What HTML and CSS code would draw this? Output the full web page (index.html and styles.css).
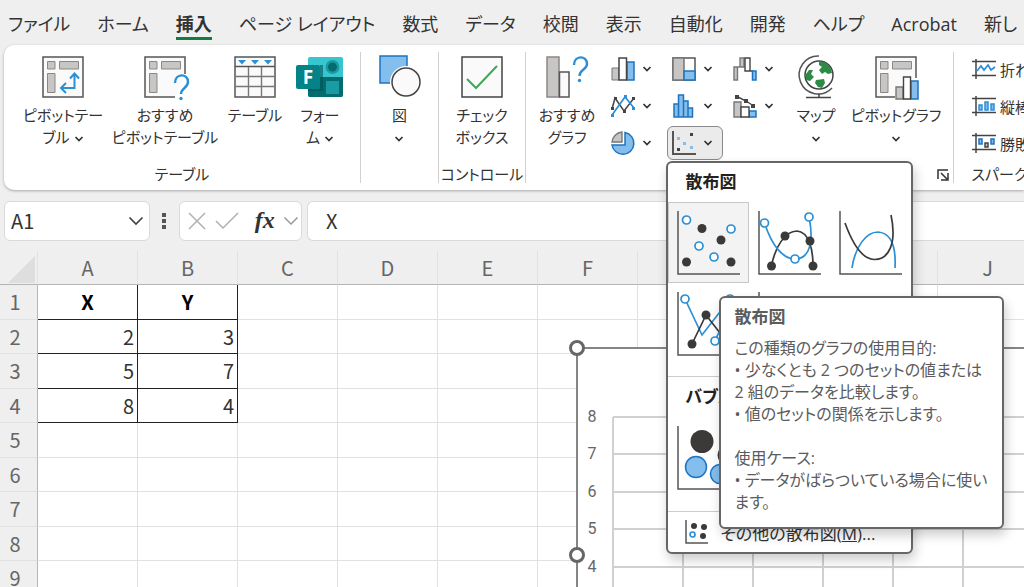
FILE: index.html
```html
<!DOCTYPE html>
<html lang="ja">
<head>
    <meta charset="UTF-8">
    <meta name="viewport" content="width=device-width, initial-scale=1.0">
    <title>Excel</title>
    <link rel="stylesheet" href="styles.css">
</head>
<body>
    <svg class="defs" width="0" height="0" aria-hidden="true">
        <symbol id="chev" viewBox="0 0 10 8"><path d="M1.5 2 L5 5.5 L8.5 2" fill="none" stroke="#333" stroke-width="1.7"/></symbol>
    </svg>
    <nav class="tabs">
        <a href="#">ファイル</a>
        <a href="#">ホーム</a>
        <a href="#" class="active">挿入</a>
        <a href="#">ページ レイアウト</a>
        <a href="#">数式</a>
        <a href="#">データ</a>
        <a href="#">校閲</a>
        <a href="#">表示</a>
        <a href="#">自動化</a>
        <a href="#">開発</a>
        <a href="#">ヘルプ</a>
        <a href="#">Acrobat</a>
        <a href="#">新し</a>
    </nav>

    <div class="ribbon">
        <section class="group group-tables">
            <div class="tools">
                <button class="tool">
                    <svg class="icon" viewBox="0 0 42 42"><path d="M1 1H41V41H1Z" fill="#fafafa" stroke="#555" stroke-width="1.5"/><g fill="#c8c6c4" stroke="#8a8886"><path d="M5.5 5.5H13V13H5.5Z M17.5 5.5H36.5V13H17.5Z M5.5 17.5H13V36.5H5.5Z"/></g><path d="M32.5 18V32H19 M28 22.5L32.5 17.5L37 22.5 M24 27L19 32L24 37" fill="none" stroke="#2b8fd6" stroke-width="2"/></svg>
                    <span>ピボットテー<br>ブル <svg class="chev"><use href="#chev"/></svg></span>
                </button>
                <button class="tool">
                    <svg class="icon" viewBox="0 0 42 42"><path d="M31 41H1V1H41V18" fill="#fafafa" stroke="#555" stroke-width="1.5"/><g fill="#c8c6c4" stroke="#8a8886"><path d="M5.5 5.5H13V13H5.5Z M17.5 5.5H36.5V13H17.5Z M5.5 17.5H13V36.5H5.5Z"/></g><path d="M31 27C31 17 44 17 44 26C44 32 37 32 37 38" fill="none" stroke="#2b8fd6" stroke-width="2.4"/><circle cx="37" cy="42.5" r="1.7" fill="#2b8fd6"/></svg>
                    <span>おすすめ<br>ピボットテーブル</span>
                </button>
                <button class="tool">
                    <svg class="icon" viewBox="0 0 42 42"><path d="M1 1H41V41H1Z" fill="#fafafa" stroke="#555" stroke-width="1.5"/><path d="M1 10.5H41" stroke="#555" stroke-width="1.5"/><path d="M1 20.5H41 M1 30.5H41 M14.5 11V41 M27.5 11V41" stroke="#777" stroke-width="1.4"/><path d="M4 4H12L8 8.5Z M17 4H25L21 8.5Z M30 4H38L34 8.5Z" fill="#2b8fd6"/></svg>
                    <span>テーブル</span>
                </button>
                <button class="tool">
                    <svg class="icon wide" viewBox="0 0 48 42"><rect x="12" y="1" width="35" height="40" rx="2" fill="#37c6d0"/><path d="M12 21H47V39a2 2 0 0 1-2 2H14a2 2 0 0 1-2-2Z" fill="#036c70"/><circle cx="36.5" cy="11" r="7" fill="#1a9ba1"/><circle cx="36.5" cy="11" r="4.5" fill="#036c70"/><rect x="30" y="25" width="13" height="13" fill="#1a9ba1"/><path d="M24 9H27V35H12V33H24Z" fill="#025357" opacity=".6"/><rect x="0" y="9" width="24" height="24" rx="2" fill="#038387"/><text x="12" y="27.5" text-anchor="middle" class="forms-f">F</text></svg>
                    <span>フォー<br>ム <svg class="chev"><use href="#chev"/></svg></span>
                </button>
            </div>
            <div class="group-name">テーブル</div>
        </section>

        <section class="group group-shapes">
            <div class="tools">
                <button class="tool">
                    <svg class="icon" viewBox="0 0 42 42"><path d="M1 0H28V27H1Z" fill="#83beec" stroke="#1e74c0" stroke-width="1.5"/><circle cx="27" cy="26" r="16" fill="#fff"/><circle cx="27" cy="26" r="14" fill="#fafafa" stroke="#444" stroke-width="1.5"/></svg>
                    <span>図<br><svg class="chev"><use href="#chev"/></svg></span>
                </button>
            </div>
        </section>

        <section class="group group-controls">
            <div class="tools">
                <button class="tool">
                    <svg class="icon" viewBox="0 0 42 42"><path d="M1 1H41V41H1Z" fill="#fafafa" stroke="#444" stroke-width="1.5"/><path d="M6 23L15 32L36 10" fill="none" stroke="#3fa858" stroke-width="2"/></svg>
                    <span>チェック<br>ボックス</span>
                </button>
            </div>
            <div class="group-name">コントロール</div>
        </section>

        <section class="group group-charts">
            <div class="tools">
                <button class="tool">
                    <svg class="icon" viewBox="0 0 42 42"><path d="M1 1H13V41H1Z" fill="#c8c6c4" stroke="#8a8886" stroke-width="1.5"/><path d="M13.5 16H23V41H13.5Z" fill="#fafafa" stroke="#555" stroke-width="1.5"/><path d="M28 9C28-1 41-1 41 8C41 14 33.5 13 33.5 20" fill="none" stroke="#2b8fd6" stroke-width="2.4"/><circle cx="33.5" cy="24.5" r="1.7" fill="#2b8fd6"/></svg>
                    <span>おすすめ<br>グラフ</span>
                </button>
                <div class="chart-buttons">
                    <button class="mini" aria-label="縦棒">
                        <svg class="mini-icon" viewBox="0 0 24 24"><path d="M1 11H8V23H1Z" fill="#c8c6c4" stroke="#777"/><path d="M16 5H23V23H16Z" fill="#83beec" stroke="#1e74c0" stroke-width="1.5"/><path d="M8 1H15.5V23H8Z" fill="#fff" stroke="#444" stroke-width="1.5"/></svg>
                        <svg class="chev"><use href="#chev"/></svg>
                    </button>
                    <button class="mini" aria-label="階層構造">
                        <svg class="mini-icon" viewBox="0 0 24 24"><path d="M1 1H23V23H1Z" fill="#fff" stroke="#555" stroke-width="1.5"/><path d="M1 1H12V23H1Z" fill="#c8c6c4" stroke="#777" stroke-width="1.5"/><path d="M12 14H23V23H12Z" fill="#83beec" stroke="#1e74c0" stroke-width="1.5"/></svg>
                        <svg class="chev"><use href="#chev"/></svg>
                    </button>
                    <button class="mini" aria-label="ウォーターフォール">
                        <svg class="mini-icon" viewBox="0 0 24 24"><path d="M1 10H4.5V23H1Z M7 1H11V10H7Z M4 10H7" fill="#c8c6c4" stroke="#777" stroke-width="1.4"/><path d="M12 1H17V14H12Z M17 14H20" fill="#fff" stroke="#444" stroke-width="1.4"/><path d="M19.5 14H23V23H19.5Z" fill="#83beec" stroke="#1e74c0" stroke-width="1.5"/></svg>
                        <svg class="chev"><use href="#chev"/></svg>
                    </button>
                    <button class="mini" aria-label="折れ線">
                        <svg class="mini-icon" viewBox="0 0 24 24"><path d="M1 15L4 4L13 17L23 4" fill="none" stroke="#444" stroke-width="1.5"/><path d="M1 21L14 3L23 14" fill="none" stroke="#2b8fd6" stroke-width="1.7"/><path d="M0 13h3v3h-3z M3 3h3v3h-3z M12 16h3v3h-3z M21 3h3v3h-3z" fill="#444"/><path d="M0 20h3v3h-3z M13 1h3v3h-3z M21 13h3v3h-3z" fill="#2b8fd6"/></svg>
                        <svg class="chev"><use href="#chev"/></svg>
                    </button>
                    <button class="mini" aria-label="統計">
                        <svg class="mini-icon" viewBox="0 0 24 24"><path d="M2 10H6.5V23H2Z M6.5 1H11.5V23H6.5Z M11.5 7H16V23H11.5Z M16 14H20.5V23H16Z" fill="#83beec" stroke="#1e74c0" stroke-width="1.5"/></svg>
                        <svg class="chev"><use href="#chev"/></svg>
                    </button>
                    <button class="mini" aria-label="複合">
                        <svg class="mini-icon" viewBox="0 0 24 24"><path d="M1 8H8V23H1Z" fill="#c8c6c4" stroke="#777" stroke-width="1.4"/><path d="M16 17H23V23H16Z" fill="#83beec" stroke="#1e74c0" stroke-width="1.5"/><path d="M8 13H16V23H8Z" fill="#fff" stroke="#444" stroke-width="1.4"/><path d="M4 2.5L13 7L20 11.5" fill="none" stroke="#444" stroke-width="1.4"/><path d="M2 1h4v4h-4z M11 5h4v4h-4z M18 10h4v4h-4z" fill="#444"/></svg>
                        <svg class="chev"><use href="#chev"/></svg>
                    </button>
                    <button class="mini" aria-label="円">
                        <svg class="mini-icon" viewBox="0 0 24 24"><path d="M14 1.5A11 11 0 1 1 1 14H14Z" fill="#83beec" stroke="#1e74c0" stroke-width="1.5"/><path d="M11 1V11H1A11 11 0 0 1 11 1Z" fill="#c8c6c4" stroke="#777" stroke-width="1.4"/></svg>
                        <svg class="chev"><use href="#chev"/></svg>
                    </button>
                    <div class="dropdown">
                        <button class="mini open" aria-label="散布図またはバブル チャート" aria-expanded="true">
                            <svg class="mini-icon" viewBox="0 0 24 24"><path d="M1 0V23H24" fill="none" stroke="#555" stroke-width="2"/><path d="M18 2h3v3h-3z M5 17h3v3h-3z" fill="#444"/><path d="M5 6h3v3h-3z M11 11h3v3h-3z M18 15h3v3h-3z" fill="#83beec"/></svg>
                            <svg class="chev"><use href="#chev"/></svg>
                        </button>
                        <div class="menu">
                            <h2>散布図</h2>
                            <div class="thumbs">
                                <button class="thumb selected" aria-label="散布図">
                                    <svg viewBox="0 0 64 64"><path class="axis" d="M1 0V63H63"/><g class="ring"><circle cx="9.5" cy="9" r="4"/><circle cx="54" cy="18" r="4"/><circle cx="22" cy="35" r="4"/><circle cx="37" cy="46" r="4"/></g><g class="dot"><circle cx="25" cy="17.5" r="4.5"/><circle cx="44" cy="29" r="4.5"/><circle cx="9.5" cy="51" r="4.5"/><circle cx="54" cy="51" r="4.5"/></g></svg>
                                </button>
                                <button class="thumb" aria-label="散布図 (平滑線とマーカー)">
                                    <svg viewBox="0 0 64 64"><path class="axis" d="M1 0V63H63"/><path class="dark" d="M13.5 55C17 36 27 20 39 20C51 21 55 38 55 55"/><path class="blue" d="M6.5 12C14 35 25 48 37 48C52 48 56 30 51 6"/><g class="ring"><circle cx="6.5" cy="12" r="4"/><circle cx="51" cy="6" r="4"/><circle cx="37" cy="48" r="4"/></g><g class="dot"><circle cx="27" cy="25" r="4.5"/><circle cx="52" cy="30" r="4.5"/><circle cx="13.5" cy="55" r="4.5"/><circle cx="55" cy="55" r="4.5"/></g></svg>
                                </button>
                                <button class="thumb" aria-label="散布図 (平滑線)">
                                    <svg viewBox="0 0 64 64"><path class="axis" d="M1 0V63H63"/><path class="blue" d="M13 57C16 36 27 21 39 21C53 22 57 38 56 57"/><path class="dark" d="M6 12C14 34 24 48 35 48.5C50 49 58 32 52 4"/></svg>
                                </button>
                                <button class="thumb" aria-label="散布図 (直線とマーカー)">
                                    <svg viewBox="0 0 64 64"><path class="axis" d="M1 0V63H63"/><path class="blue" d="M8 7L25 43L53 7"/><path class="dark" d="M15 52L29 23L50 50"/><path class="blue" d="M38 49L42 40"/><g class="ring"><circle cx="8" cy="7" r="4"/><circle cx="53" cy="7" r="4"/><circle cx="38" cy="49" r="4"/></g><g class="dot"><circle cx="29" cy="23" r="4.5"/><circle cx="15" cy="52" r="4.5"/></g></svg>
                                </button>
                                <button class="thumb" aria-label="散布図 (直線)">
                                    <svg viewBox="0 0 64 64"><path class="axis" d="M1 0V63H63"/></svg>
                                </button>
                            </div>
                            <h2 class="divided">バブル</h2>
                            <div class="thumbs">
                                <button class="thumb" aria-label="バブル">
                                    <svg viewBox="0 0 64 64"><path class="axis" d="M1 0V63H63"/><g class="dot"><circle cx="25" cy="15.5" r="11.5"/><circle cx="50" cy="29" r="9.5"/></g><g fill="#83beec" stroke="#1e74c0" stroke-width="1.5"><circle cx="19" cy="41" r="10.5"/><circle cx="43" cy="48" r="9.5"/></g></svg>
                                </button>
                            </div>
                            <button class="more">
                                <svg viewBox="0 0 24 24"><path class="axis" d="M1 0V23H23"/><g class="dot"><circle cx="9" cy="6" r="3"/><circle cx="19" cy="7" r="3"/><circle cx="18" cy="16" r="3"/></g><circle class="small-ring" cx="7.5" cy="14.5" r="2.5"/></svg>
                                <span>その他の散布図(<u>M</u>)...</span>
                            </button>
                            <div class="tooltip" role="tooltip">
                                <strong>散布図</strong>
                                <p>この種類のグラフの使用目的:<br>
                                • 少なくとも 2 つのセットの値または<br>
                                2 組のデータを比較します。<br>
                                • 値のセットの関係を示します。</p>
                                <p>使用ケース:<br>
                                • データがばらついている場合に使い<br>
                                ます。</p>
                            </div>
                        </div>
                    </div>
                </div>
                <button class="tool">
                    <svg class="icon" viewBox="0 0 42 42"><path d="M24 0A19 19 0 1 0 37 32" fill="none" stroke="#555" stroke-width="1.5"/><circle cx="24" cy="19" r="14" fill="#fff" stroke="#444" stroke-width="1.5"/><path d="M24 6C30 4 36 10 37 17L33 18L30 16L27 18L24 14L27 11L24 9Z M11 18L14 14L18 14L16 18L19 21L15 25L11 24Z M21 24L29 23L30 27L27 32L23 31L20 27Z" fill="#2e8b45"/><path d="M24 38V41 M11 41.5H36" stroke="#444" stroke-width="1.5"/></svg>
                    <span>マップ<br><svg class="chev"><use href="#chev"/></svg></span>
                </button>
                <button class="tool">
                    <svg class="icon" viewBox="0 0 42 42"><path d="M20 41H1V1H41V22" fill="#fafafa" stroke="#555" stroke-width="1.5"/><g fill="#c8c6c4" stroke="#8a8886"><path d="M5.5 5.5H13V13H5.5Z M17.5 5.5H36.5V13H17.5Z M5.5 17.5H13V36.5H5.5Z"/></g><path d="M21 31H28V43H21Z" fill="#c8c6c4" stroke="#777" stroke-width="1.4"/><path d="M36 25H43V43H36Z" fill="#83beec" stroke="#1e74c0" stroke-width="1.5"/><path d="M28.5 21H35.5V43H28.5Z" fill="#fff" stroke="#444" stroke-width="1.4"/></svg>
                    <span>ピボットグラフ<br><svg class="chev"><use href="#chev"/></svg></span>
                </button>
            </div>
            <button class="launcher" aria-label="グラフの設定">
                <svg viewBox="0 0 12 12"><path d="M1 10V1H11 M4 4L10 10 M11 4V11H4" fill="none" stroke="#333" stroke-width="1.5"/></svg>
            </button>
        </section>

        <section class="group group-spark">
            <div class="spark-list">
                <button class="spark">
                    <svg viewBox="0 0 24 20"><path d="M0 2.5H24 M0 16.5H24 M4 0V20" stroke="#444" stroke-width="1.5"/><path d="M5 12L9 7L12 11L16 6L19 11L23 8" fill="none" stroke="#2b8fd6" stroke-width="1.7"/></svg>
                    <span>折れ</span>
                </button>
                <button class="spark">
                    <svg viewBox="0 0 24 20"><path d="M0 2.5H24 M0 16.5H24 M4 0V20" stroke="#444" stroke-width="1.5"/><path d="M7 9H10V14H7Z M13 6H16V14H13Z M19 8H22V14H19Z" fill="#83beec" stroke="#2b8fd6" stroke-width="1.5"/></svg>
                    <span>縦棒</span>
                </button>
                <button class="spark">
                    <svg viewBox="0 0 24 20"><path d="M0 2.5H24 M0 16.5H24 M4 0V20" stroke="#444" stroke-width="1.5"/><path d="M7 6H10V11H7Z M19 6H22V11H19Z" fill="#83beec" stroke="#1e74c0" stroke-width="1.5"/><path d="M13 10H16V14H13Z" fill="#c8c6c4" stroke="#444" stroke-width="1.5"/></svg>
                    <span>勝敗</span>
                </button>
            </div>
            <div class="group-name">スパーク</div>
        </section>
    </div>

    <div class="formula-bar">
        <div class="name-box">
            <input type="text" value="A1" aria-label="名前ボックス">
            <button aria-label="名前の一覧"><svg width="14" height="10" viewBox="0 0 14 10"><path d="M0.5 1.5L7 8L13.5 1.5" fill="none" stroke="#444" stroke-width="1.7"/></svg></button>
        </div>
        <svg class="grip" viewBox="0 0 4 16"><path d="M0 0h4v4h-4z M0 6h4v4h-4z M0 12h4v4h-4z" fill="#555"/></svg>
        <div class="fx-box">
            <button aria-label="キャンセル"><svg width="18" height="18" viewBox="0 0 18 18"><path d="M1 1L17 17M17 1L1 17" stroke="#b0b0b0" stroke-width="1.5"/></svg></button>
            <button aria-label="入力"><svg width="24" height="18" viewBox="0 0 24 18"><path d="M1 9L8 16L23 1" fill="none" stroke="#b0b0b0" stroke-width="1.5"/></svg></button>
            <button class="fx" aria-label="関数の挿入">fx</button>
            <button aria-label="関数の一覧"><svg width="14" height="10" viewBox="0 0 14 10"><path d="M0.5 1.5L7 8L13.5 1.5" fill="none" stroke="#999" stroke-width="1.5"/></svg></button>
        </div>
        <input class="formula" type="text" value="X" aria-label="数式バー">
    </div>

    <main class="sheet">
        <table>
            <thead>
                <tr><th class="corner"><svg width="27" height="27" viewBox="0 0 27 27"><path d="M27 0V27H0Z" fill="#dedede"/></svg></th><th>A</th><th>B</th><th>C</th><th>D</th><th>E</th><th>F</th><th>G</th><th>H</th><th>I</th><th>J</th></tr>
            </thead>
            <tbody>
                <tr><th>1</th><td class="data title">X</td><td class="data title">Y</td><td></td><td></td><td></td><td></td><td></td><td></td><td></td><td></td></tr>
                <tr><th>2</th><td class="data">2</td><td class="data">3</td><td></td><td></td><td></td><td></td><td></td><td></td><td></td><td></td></tr>
                <tr><th>3</th><td class="data">5</td><td class="data">7</td><td></td><td></td><td></td><td></td><td></td><td></td><td></td><td></td></tr>
                <tr><th>4</th><td class="data">8</td><td class="data">4</td><td></td><td></td><td></td><td></td><td></td><td></td><td></td><td></td></tr>
                <tr><th>5</th><td></td><td></td><td></td><td></td><td></td><td></td><td></td><td></td><td></td><td></td></tr>
                <tr><th>6</th><td></td><td></td><td></td><td></td><td></td><td></td><td></td><td></td><td></td><td></td></tr>
                <tr><th>7</th><td></td><td></td><td></td><td></td><td></td><td></td><td></td><td></td><td></td><td></td></tr>
                <tr><th>8</th><td></td><td></td><td></td><td></td><td></td><td></td><td></td><td></td><td></td><td></td></tr>
                <tr><th>9</th><td></td><td></td><td></td><td></td><td></td><td></td><td></td><td></td><td></td><td></td></tr>
            </tbody>
        </table>
        <!-- embedded chart, floats over the cells -->
        <div class="chart">
            <svg width="100%" height="100%">
                <path d="M35 68H1200 M35 105H1200 M35 143H1200 M35 180H1200 M35 218H1200" class="gridline"/>
                <path d="M35 68V400 M105 68V400 M175 68V400 M245 68V400 M315 68V400 M385 68V400" class="gridline"/>
                <g class="axis-text">
                    <text x="14" y="73">8</text>
                    <text x="14" y="110">7</text>
                    <text x="14" y="148">6</text>
                    <text x="14" y="185">5</text>
                    <text x="14" y="223">4</text>
                </g>
            </svg>
            <span class="handle handle-top"></span>
            <span class="handle handle-mid"></span>
        </div>
    </main>
</body>
</html>
```

FILE: styles.css
```css
* {
    box-sizing: border-box;
}
body {
    margin: 0;
    height: 100vh;
    display: flex;
    flex-direction: column;
    overflow: hidden;
    background: #efefef;
    color: #333;
    font-family: "Open Sans", "Noto Sans CJK JP", sans-serif;
    font-size: 15px;
    font-feature-settings: "palt";
}
button, input {
    font: inherit;
    font-feature-settings: inherit;
    color: inherit;
    background: none;
    border: none;
    padding: 0;
    margin: 0;
}
button {
    cursor: pointer;
}
svg {
    display: block;
    overflow: visible;
}
.defs {
    position: absolute;
}

/* tabs */
.tabs {
    display: flex;
    flex: none;
    gap: 27px;
    height: 45px;
    padding: 8px 8px 0;
    white-space: nowrap;
}
.tabs a {
    height: 32px;
    line-height: 32px;
    font-size: 18px;
    color: #333;
    text-decoration: none;
}
.tabs .active {
    font-weight: bold;
    border-bottom: 3px solid #107c41;
}

/* ribbon */
.ribbon {
    display: flex;
    flex: none;
    height: 145px;
    margin-left: 4px;
    padding: 7px 0;
    background: #fff;
    border-radius: 10px 0 0 10px;
    box-shadow: 0 1px 3px rgba(0, 0, 0, 0.3);
    white-space: nowrap;
}
.group {
    position: relative;
    display: flex;
    flex: none;
    flex-direction: column;
    justify-content: space-between;
    border-right: 1px solid #d0d0d0;
}
.tools {
    display: grid;
    justify-items: center;
    align-items: start;
}
.group-tables .tools {
    grid-template-columns: 96px 108px 72px 58px;
    padding: 0 11px;
}
.group-shapes .tools {
    grid-template-columns: 77px;
}
.group-controls .tools {
    grid-template-columns: 86px;
}
.group-charts .tools {
    grid-template-columns: 76px 184px 54px 106px;
    padding: 0 4px 0 3px;
}
.group-name {
    height: 18px;
    line-height: 18px;
    text-align: center;
}
.tool {
    display: flex;
    flex-direction: column;
    align-items: center;
    gap: 6px;
    padding-top: 4px;
    line-height: 22px;
}
.icon {
    width: 42px;
    height: 42px;
}
.icon.wide {
    width: 48px;
}
.forms-f {
    font: bold 19px "Open Sans", sans-serif;
    fill: #fff;
}
.chev {
    display: inline-block;
    width: 10px;
    height: 8px;
}
.chart-buttons {
    display: grid;
    grid-template-columns: repeat(3, 61px);
    grid-auto-rows: 37px;
}
.mini {
    display: flex;
    align-items: center;
    gap: 7px;
    width: 56px;
    height: 34px;
    padding-left: 4px;
    border: 1px solid transparent;
    border-radius: 6px;
}
.mini.open {
    background: #ebebeb;
    border-color: #8a8a8a;
}
.mini-icon {
    width: 24px;
    height: 24px;
}
.launcher {
    position: absolute;
    right: 4px;
    bottom: 2px;
}
.launcher svg {
    width: 12px;
    height: 12px;
}
.group-spark {
    padding-left: 15px;
    border: none;
}
.spark-list {
    display: grid;
    gap: 3px;
}
.spark {
    display: flex;
    align-items: center;
    gap: 4px;
    height: 34px;
    padding-left: 3px;
}
.spark svg {
    width: 24px;
    height: 20px;
}

/* scatter menu */
.dropdown {
    position: relative;
    z-index: 5;
}
.menu {
    position: absolute;
    top: 35px;
    left: -1px;
    width: 247px;
    background: #fff;
    border: 2px solid #666;
    border-radius: 6px;
    box-shadow: 2px 6px 12px rgba(0, 0, 0, 0.2);
}
.menu h2 {
    margin: 0;
    height: 39px;
    padding-left: 18px;
    line-height: 38px;
    font-size: 17px;
    color: #222;
}
.menu .divided {
    height: 41px;
    margin-top: 12px;
    line-height: 40px;
    border-top: 1px solid #ccc;
}
.thumbs {
    display: grid;
    grid-template-columns: repeat(3, 81px);
}
.thumb {
    height: 81px;
    padding: 8px;
    border: 1px solid transparent;
}
.thumb.selected {
    background: #f3f3f3;
    border-color: #c8c8c8;
}
.thumb svg {
    width: 64px;
    height: 64px;
}
.axis {
    fill: none;
    stroke: #555;
    stroke-width: 1.5;
}
.ring, .small-ring {
    fill: #fff;
    stroke: #2b8fd6;
    stroke-width: 1.7;
}
.dot {
    fill: #3b3a39;
}
.dark, .blue {
    fill: none;
    stroke: #3b3a39;
    stroke-width: 1.7;
}
.blue {
    stroke: #2b8fd6;
}
.more {
    display: flex;
    align-items: center;
    gap: 12px;
    width: 100%;
    height: 41px;
    margin-top: 13px;
    padding-left: 17px;
    border-top: 1px solid #ccc;
    font-size: 17px;
}
.more svg {
    width: 24px;
    height: 24px;
}
.tooltip {
    position: absolute;
    top: 133px;
    left: 51px;
    width: 285px;
    padding: 8px 14px 14px;
    background: #fff;
    border: 2px solid #666;
    border-radius: 6px;
    box-shadow: 2px 6px 12px rgba(0, 0, 0, 0.2);
    color: #5c5c5c;
    font-size: 16px;
    line-height: 22px;
}
.tooltip strong {
    display: block;
    margin-bottom: 9px;
    font-size: 17px;
}
.tooltip p {
    margin: 0;
}
.tooltip p + p {
    margin-top: 22px;
}

/* formula bar */
.formula-bar {
    display: flex;
    flex: none;
    align-items: center;
    height: 61px;
    padding: 0 0 0 4px;
    font-family: "Noto Sans CJK JP", sans-serif;
    font-size: 20px;
}
.name-box, .fx-box, .formula {
    display: flex;
    align-items: center;
    height: 40px;
    background: #fff;
    border: 1px solid #dadada;
    border-radius: 6px;
}
.name-box {
    width: 146px;
    padding: 0 6px;
}
.name-box input {
    flex: 1;
    min-width: 0;
}
.grip {
    width: 4px;
    height: 16px;
    margin: 0 13px 0 12px;
}
.fx-box {
    width: 123px;
    justify-content: space-between;
    padding: 0 3px 0 8px;
}
.fx {
    padding-left: 6px;
    font: italic bold 24px "Liberation Serif", serif;
}
.formula {
    flex: 1;
    min-width: 0;
    margin-left: 5px;
    padding-left: 18px;
    border-radius: 6px 0 0 6px;
    border-right: none;
}

/* sheet */
.sheet {
    position: relative;
    flex: 1;
    min-height: 0;
    overflow: hidden;
}
.sheet table {
    width: 1038px;
    table-layout: fixed;
    border-collapse: separate;
    border-spacing: 0;
    font-family: "Noto Sans CJK JP", sans-serif;
    font-size: 20px;
    line-height: 30px;
}
.sheet th, .sheet td {
    height: 35px;
    padding: 0;
    font-weight: normal;
    border-right: 1px solid #e1e1e1;
    border-bottom: 1px solid #e1e1e1;
}
.sheet tbody tr:nth-child(even) th, .sheet tbody tr:nth-child(even) td {
    height: 34px;
}
.sheet th {
    color: #666;
    background: #efefef;
}
.sheet thead th {
    height: 34px;
    border-bottom-color: #b5b5b5;
}
.sheet th:first-child {
    width: 38px;
    padding-right: 7px;
    border-right-color: #b5b5b5;
}
.sheet th.corner {
    padding: 3px 0 0 8px;
    border-right-color: #e1e1e1;
}
.sheet td {
    background: #fff;
}
.sheet .data {
    padding-right: 3px;
    text-align: right;
    color: #333;
    border-color: #222;
}
.sheet .title {
    padding: 0;
    text-align: center;
    font-weight: bold;
    color: #000;
}
.chart {
    position: absolute;
    top: 96px;
    left: 576px;
    right: -10px;
    bottom: -10px;
    background: #fff;
    border: 2px solid #858585;
}
.gridline {
    fill: none;
    stroke: #d0d0d0;
    stroke-width: 2;
}
.axis-text {
    font: 16px Roboto, sans-serif;
    fill: #666;
    text-anchor: middle;
}
.handle {
    position: absolute;
    left: -9px;
    width: 16px;
    height: 16px;
    background: #fff;
    border: 3px solid #666;
    border-radius: 50%;
}
.handle-top {
    top: -9px;
}
.handle-mid {
    top: 198px;
}
```
